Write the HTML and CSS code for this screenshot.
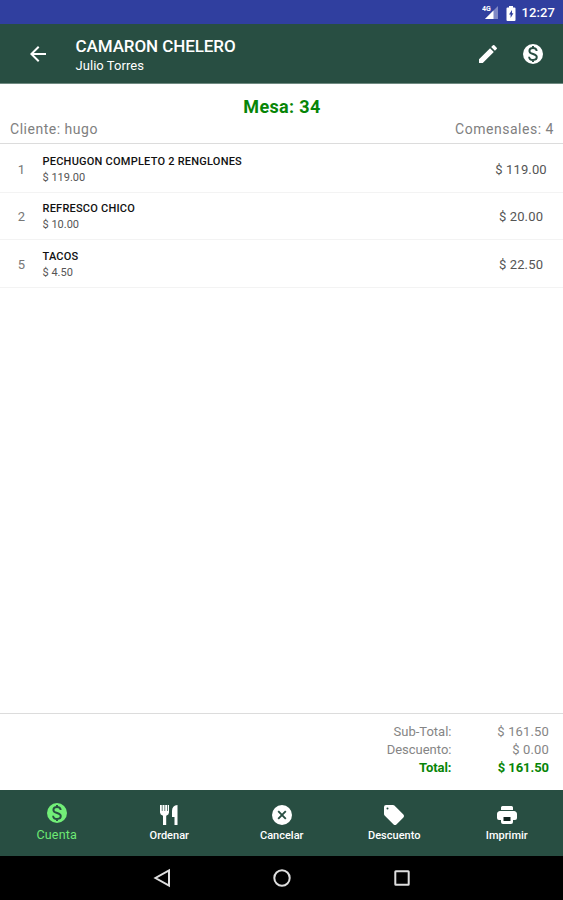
FILE: index.html
```html
<!DOCTYPE html>
<html lang="es">
<head>
<meta charset="utf-8">
<title>Camaron Chelero</title>
<link rel="stylesheet" href="styles.css">
</head>
<body>
<svg width="0" height="0" class="defs">
  <symbol id="coin" viewBox="0 0 24 24"><circle cx="12" cy="12" r="10"/><path class="dollar" d="M15.700 9C15.500 7 14 6 12 6c-2.200 0-3.600 1.200-3.600 2.900 0 4.100 7.400 2.100 7.400 6.200 0 1.900-1.500 2.900-3.700 2.900-2.400 0-3.900-1.200-4-3.300M12 4v2M12 18v2"/></symbol>
</svg>
<div class="screen">
  <div class="status">
    <svg class="signal" width="17" height="16" viewBox="0 0 17 16"><path d="M16 1v13H3z" fill="#8089c5"/><path d="M11.500 5.500V14H3z"/><text x="0" y="6">4G</text></svg>
    <svg class="battery" width="10" height="15" viewBox="0 0 10 15"><path fill-rule="evenodd" d="M3 0h4v1.500h1.500q1 0 1 1V14q0 1-1 1h-7q-1 0-1-1V2.500q0-1 1-1H3zM6 4L3 8.500h1.600V12L7.400 7.300H6z"/></svg>
    <span class="clock">12:27</span>
  </div>
  <header class="appbar">
    <svg class="icon" viewBox="0 0 24 24"><path d="M20 11H7.830l5.590-5.590L12 4l-8 8 8 8 1.410-1.410L7.830 13H20v-2z"/></svg>
    <div class="titles">
      <div class="title">CAMARON CHELERO</div>
      <div class="subtitle">Julio Torres</div>
    </div>
    <svg class="icon edit" viewBox="0 0 24 24"><path d="M3 17.250V21h3.750L17.810 9.940l-3.750-3.750L3 17.250zM20.710 7.040a1 1 0 0 0 0-1.410l-2.340-2.340a1 1 0 0 0-1.410 0l-1.830 1.830 3.750 3.750 1.830-1.830z"/></svg>
    <svg class="icon"><use href="#coin"/></svg>
  </header>
  <section class="table-info">
    <div class="mesa">Mesa: 34</div>
    <div class="people"><span class="client">Cliente: hugo</span><span class="guests">Comensales: 4</span></div>
  </section>
  <main class="items">
    <div class="item"><span class="qty">1</span><div class="desc"><div class="name">PECHUGON COMPLETO 2 RENGLONES</div><div class="price">$ 119.00</div></div><span class="amount">$ 119.00</span></div>
    <div class="item"><span class="qty">2</span><div class="desc"><div class="name">REFRESCO CHICO</div><div class="price">$ 10.00</div></div><span class="amount">$ 20.00</span></div>
    <div class="item"><span class="qty">5</span><div class="desc"><div class="name">TACOS</div><div class="price">$ 4.50</div></div><span class="amount">$ 22.50</span></div>
  </main>
  <section class="totals">
    <div class="line"><span>Sub-Total:</span><span class="sum">$ 161.50</span></div>
    <div class="line"><span>Descuento:</span><span class="sum">$ 0.00</span></div>
    <div class="line total"><span>Total:</span><span class="sum">$ 161.50</span></div>
  </section>
  <nav class="tabs">
    <div class="tab active"><svg class="icon"><use href="#coin"/></svg><span>Cuenta</span></div>
    <div class="tab"><svg class="icon" viewBox="0 0 24 24"><path d="M3 2h1.800v6h.7V2h2v6h.7V2h2v6h.7V2H12v7.500q0 2.300-2.800 3.200V22H6v-9.300q-3-.9-3-3.200zM20.500 2v20h-3v-8H15V8q0-5.500 5.500-6z"/></svg><span>Ordenar</span></div>
    <div class="tab"><svg class="icon" viewBox="0 0 24 24"><circle cx="12" cy="12" r="10"/><path class="cross" d="M8.200 8.200l7.600 7.600M15.800 8.200l-7.600 7.600"/></svg><span>Cancelar</span></div>
    <div class="tab"><svg class="icon" viewBox="0 0 24 24"><path d="M21.410 11.580l-9-9A2 2 0 0 0 11 2H4a2 2 0 0 0-2 2v7c0 .55.22 1.050.59 1.420l9 9a2 2 0 0 0 2.820 0l7-7a2 2 0 0 0 0-2.840zM5.500 6.500a1 1 0 1 1 0-2 1 1 0 0 1 0 2z"/></svg><span>Descuento</span></div>
    <div class="tab"><svg class="icon" viewBox="0 0 24 24"><path d="M19 8H5c-1.660 0-3 1.340-3 3v4q0 2 2 2h2v2q0 2 2 2h8q2 0 2-2v-2h2q2 0 2-2v-4c0-1.660-1.340-3-3-3zM16.500 3h-9Q6 3 6 4.500V7h12V4.500Q18 3 16.500 3z"/><path d="M8.500 14h7v4h-7z" fill="#10251f"/></svg><span>Imprimir</span></div>
  </nav>
  <div class="sysnav">
    <svg width="20" height="20" viewBox="0 0 20 20"><path d="M17 2.500v15L3.500 10z"/></svg>
    <svg width="20" height="20" viewBox="0 0 20 20"><circle cx="10" cy="10" r="7.700"/></svg>
    <svg width="20" height="20" viewBox="0 0 20 20"><rect x="3.300" y="3.300" width="13.400" height="13.400" rx=".5"/></svg>
  </div>
</div>
</body>
</html>
```
FILE: styles.css
```css
* { box-sizing: border-box; }
body { margin: 0; font-family: Roboto, "Liberation Sans", sans-serif; background: #fff; }
svg { display: block; flex: none; fill: #fff; }
.defs { position: absolute; }
.screen { width: 563px; height: 900px; display: flex; flex-direction: column; overflow: hidden; }
.icon { width: 24px; height: 24px; }
.dollar, .cross { fill: none; stroke: #284e42; stroke-width: 1.900; }

.status { height: 24px; flex: none; background: #303f9f; display: flex; align-items: center; justify-content: flex-end; padding: 2px 8px 0 0; color: #fff; }
.signal { margin-right: 7px; }
.signal text { font-size: 7px; font-weight: 700; }
.battery { margin-right: 6px; }
.clock { font-size: 13px; font-weight: 500; line-height: 20px; letter-spacing: .1px; }

.appbar { height: 60px; flex: none; background: #284e42; border-bottom: 1px solid #6f8a81; display: flex; align-items: center; padding: 0 18px 0 26px; color: #fff; }
.titles { flex: 1; padding: 4px 0 0 25.500px; }
.title { font-size: 17px; line-height: 20px; font-weight: 500; letter-spacing: -.08px; }
.subtitle { font-size: 13px; line-height: 20px; letter-spacing: .05px; }
.edit { margin-right: 21px; }

.table-info { height: 60px; flex: none; padding: 12px 9px 0 10px; border-bottom: 1px solid #dcdcdc; }
.mesa { text-align: center; font-size: 18px; line-height: 22px; font-weight: 700; color: #078507; letter-spacing: .35px; }
.people { display: flex; justify-content: space-between; font-size: 14px; line-height: 23px; color: #808080; letter-spacing: .52px; }

.items { flex: 1; padding-top: 1px; }
.item { height: 47.600px; display: flex; align-items: center; border-bottom: 1px solid #f3f3f3; padding-top: 2px; }
.qty { width: 43px; margin-right: -.5px; text-align: center; font-size: 13px; color: #777; }
.desc { flex: 1; }
.name { font-size: 11px; line-height: 16px; font-weight: 500; color: #111; letter-spacing: .23px; }
.price { font-size: 11px; line-height: 15px; color: #555; }
.amount { width: 84px; text-align: center; font-size: 13px; color: #555; letter-spacing: .15px; }

.totals { height: 77px; flex: none; border-top: 1px solid #dcdcdc; padding: 9px 14px 0 0; font-size: 13px; line-height: 18px; color: #858585; }
.line { display: flex; justify-content: flex-end; }
.sum { width: 97.500px; text-align: right; letter-spacing: .15px; }
.total { color: #078507; font-weight: 700; }
.total span { letter-spacing: -.05px; }

.tabs { height: 66px; flex: none; background: #284e42; display: flex; color: #fff; }
.tab { flex: 1; display: flex; flex-direction: column; align-items: center; padding-top: 13px; font-size: 11px; line-height: 18px; font-weight: 500; }
.tab.active { padding: 11px 0 0 .5px; color: #6eea75; font-size: 12.500px; line-height: 20px; font-weight: 400; letter-spacing: .2px; }
.tab.active svg { fill: #72ef78; }

.sysnav { height: 44px; flex: none; background: #000; display: flex; justify-content: center; align-items: center; gap: 100px; }
.sysnav svg { fill: none; stroke: #dedede; stroke-width: 2; }
```
